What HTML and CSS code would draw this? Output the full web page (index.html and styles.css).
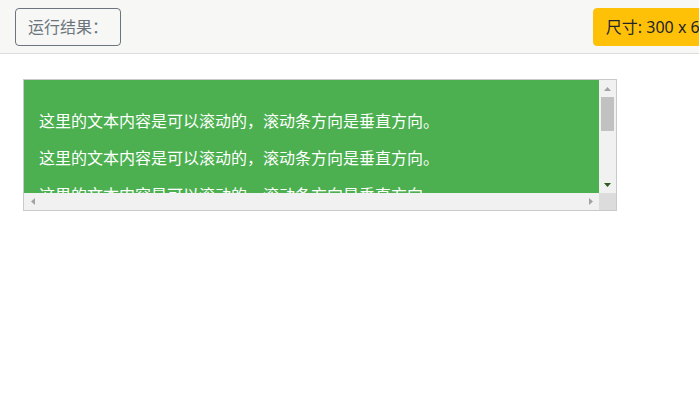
FILE: index.html
```html
<!DOCTYPE html>
<html lang="zh">
<head>
<meta charset="utf-8">
<title>运行结果</title>
<link rel="stylesheet" href="styles.css">
</head>
<body>
<header class="toolbar">
  <button class="btn btn-outline">运行结果：</button>
  <button class="btn btn-warning">尺寸: 300 x 600</button>
</header>
<main class="stage">
  <div class="scroll-box">
    <div class="viewport">
      <div class="content">
        <p>这里的文本内容是可以滚动的，滚动条方向是垂直方向。</p>
        <p>这里的文本内容是可以滚动的，滚动条方向是垂直方向。</p>
        <p>这里的文本内容是可以滚动的，滚动条方向是垂直方向。</p>
        <p>这里的文本内容是可以滚动的，滚动条方向是垂直方向。</p>
        <p>这里的文本内容是可以滚动的，滚动条方向是垂直方向。</p>
      </div>
    </div>
    <div class="vbar">
      <div class="sb-btn">
        <svg width="7" height="4" viewBox="0 0 7 4"><polygon points="3.5,0 7,4 0,4" fill="#a3a3a3"/></svg>
      </div>
      <div class="vtrack"><div class="vthumb"></div></div>
      <div class="sb-btn">
        <svg width="7" height="4" viewBox="0 0 7 4"><polygon points="0,0 7,0 3.5,4" fill="#2d5a1e"/></svg>
      </div>
    </div>
    <div class="hbar">
      <div class="sb-btn">
        <svg width="4" height="7" viewBox="0 0 4 7"><polygon points="4,0 4,7 0,3.5" fill="#a3a3a3"/></svg>
      </div>
      <div class="htrack"></div>
      <div class="sb-btn">
        <svg width="4" height="7" viewBox="0 0 4 7"><polygon points="0,0 4,3.5 0,7" fill="#a3a3a3"/></svg>
      </div>
    </div>
    <div class="corner"></div>
  </div>
</main>
</body>
</html>
```
FILE: styles.css
```css
html, body {
  margin: 0;
  padding: 0;
  background: #ffffff;
  overflow: hidden;
}
body {
  font-family: "Noto Sans", "Noto Sans CJK SC", sans-serif;
  width: 699px;
}
.toolbar {
  display: flex;
  justify-content: space-between;
  align-items: center;
  width: 746px;
  height: 54px;
  box-sizing: border-box;
  padding: 0 15px;
  background: #f7f7f5;
  border-bottom: 1px solid #dcdcdc;
}
.btn {
  flex-shrink: 0;
  height: 38px;
  box-sizing: border-box;
  padding: 0 12px;
  border-radius: 4px;
  font-family: "Noto Sans", "Noto Sans CJK SC", sans-serif;
  font-size: 16px;
  line-height: 36px;
  white-space: nowrap;
}
.btn-outline {
  border: 1px solid #6c757d;
  background: transparent;
  color: #6c757d;
}
.btn-warning {
  border: 1px solid #ffc107;
  background: #ffc107;
  color: #212529;
}
.stage {
  padding: 25px 23px 24px;
}
.scroll-box {
  display: grid;
  grid-template-columns: 575px 17px;
  grid-template-rows: 113px 17px;
  width: 592px;
  border: 1px solid #cacaca;
}
.viewport {
  overflow: hidden;
  background: #4caf50;
}
.content {
  padding: 15px;
  color: #ffffff;
  font-size: 16px;
  line-height: 21px;
  white-space: nowrap;
}
.content p {
  margin: 16px 0;
}
.vbar {
  display: flex;
  flex-direction: column;
  background: #f1f1f1;
}
.hbar {
  display: flex;
  background: #f1f1f1;
}
.sb-btn {
  flex: 0 0 17px;
  width: 17px;
  height: 17px;
  display: flex;
  align-items: center;
  justify-content: center;
}
.vtrack {
  flex: 1;
  padding: 0 2px;
}
.vthumb {
  height: 34px;
  background: #c1c1c1;
}
.htrack {
  flex: 1;
}
.corner {
  background: #dcdcdc;
}
```
